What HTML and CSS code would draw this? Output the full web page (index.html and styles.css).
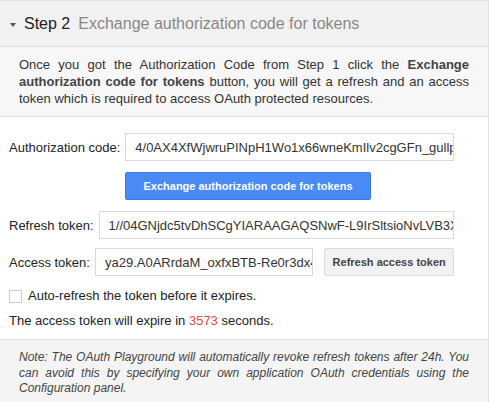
FILE: index.html
```html
<!DOCTYPE html>
<html>
<head>
<meta charset="utf-8">
<link rel="stylesheet" href="styles.css">
</head>
<body>
<div class="panel">
  <div class="step-header">
    <span class="caret"></span>
    <span class="step-num">Step 2</span>
    <span class="step-title">Exchange authorization code for tokens</span>
  </div>
  <div class="desc">
    Once you got the Authorization Code from Step 1 click the <b>Exchange authorization code for tokens</b> button, you will get a refresh and an access token which is required to access OAuth protected resources.
  </div>
  <div class="form">
    <div class="row row-auth">
      <label class="lbl">Authorization code:</label>
      <input class="field field-auth" type="text" value="4/0AX4XfWjwruPINpH1Wo1x66wneKmIlv2cgGFn_gullp7xRzVq">
    </div>
    <div class="btn-row">
      <button class="btn-primary">Exchange authorization code for tokens</button>
    </div>
    <div class="row row-refresh">
      <label class="lbl">Refresh token:</label>
      <input class="field field-refresh" type="text" value="1//04GNjdc5tvDhSCgYIARAAGAQSNwF-L9IrSltsioNvLVB3XqW">
    </div>
    <div class="row row-access">
      <label class="lbl">Access token:</label>
      <input class="field field-access" type="text" value="ya29.A0ARrdaM_oxfxBTB-Re0r3dx4kQ">
      <button class="btn-secondary">Refresh access token</button>
    </div>
    <div class="check-row">
      <span class="checkbox"></span>
      <span>Auto-refresh the token before it expires.</span>
    </div>
    <div class="expire">The access token will expire in <span class="secs">3573</span> seconds.</div>
  </div>
  <div class="note">
    Note: The OAuth Playground will automatically revoke refresh tokens after 24h. You can avoid this by specifying your own application OAuth credentials using the Configuration panel.
  </div>
</div>
</body>
</html>
```

FILE: styles.css
```css
html, body {
  margin: 0;
  padding: 0;
  background: #fff;
}
body {
  font-family: "Liberation Sans", Arial, sans-serif;
  color: #222;
}
.panel {
  width: 488px;
  border-right: 1px solid #e0e0e0;
  min-height: 402px;
  display: flex;
  flex-direction: column;
}
.step-header {
  box-sizing: border-box;
  height: 47px;
  border-top: 1px solid #e2e2e2;
  border-bottom: 1px solid #dcdcdc;
  background: #f1f1f1;
  display: flex;
  align-items: center;
  padding-left: 10px;
  padding-top: 1px;
  font-size: 16px;
}
.caret {
  width: 0;
  height: 0;
  border-left: 3.5px solid transparent;
  border-right: 3.5px solid transparent;
  border-top: 4px solid #555;
  margin-right: 8px;
  margin-top: 1px;
}
.step-num {
  color: #222;
  margin-right: 8px;
}
.step-title {
  color: #888;
}
.desc {
  background: #f7f7f7;
  border-bottom: 1px solid #e2e2e2;
  padding: 9px 19px 9px 19px;
  font-size: 13px;
  line-height: 17px;
  color: #333;
  text-align: justify;
}
.desc b {
  color: #444;
}
.form {
  padding: 16px 34px 0 9px;
  font-size: 13px;
  flex: 1;
}
.row {
  display: flex;
  align-items: center;
}
.lbl {
  color: #222;
  white-space: nowrap;
}
.field {
  height: 28px;
  box-sizing: border-box;
  border: 1px solid #d9d9d9;
  padding: 0 0 0 9px;
  font-family: "Liberation Sans", Arial, sans-serif;
  font-size: 13px;
  color: #333;
  background: #fff;
  outline: none;
}
.field-auth {
  margin-left: 5px;
  flex: 1;
  min-width: 0;
}
.field-refresh {
  margin-left: 5px;
  flex: 1;
  min-width: 0;
}
.field-access {
  margin-left: 5px;
  width: 219px;
}
.btn-row {
  margin: 11px 0 11px 116px;
}
.btn-primary {
  height: 28px;
  width: 246px;
  background: #4a8af4;
  border: 1px solid #3b7be8;
  border-radius: 2px;
  color: #fff;
  font-family: "Liberation Sans", Arial, sans-serif;
  font-weight: bold;
  font-size: 11px;
  padding: 0;
}
.row-access {
  margin-top: 9px;
}
.btn-secondary {
  margin-left: 11px;
  height: 28px;
  width: 130px;
  background: #f2f2f2;
  border: 1px solid #dcdcdc;
  border-radius: 2px;
  color: #444;
  font-family: "Liberation Sans", Arial, sans-serif;
  font-weight: bold;
  font-size: 11px;
  padding: 0;
}
.check-row {
  display: flex;
  align-items: center;
  margin-top: 12px;
  line-height: 16px;
  color: #222;
}
.checkbox {
  width: 11px;
  height: 11px;
  border: 1px solid #ccc;
  background: #fff;
  margin-right: 6px;
}
.expire {
  margin-top: 9px;
  line-height: 16px;
  color: #222;
}
.secs {
  color: #dd4b39;
}
.note {
  margin-top: 10px;
  background: #f4f4f4;
  border-top: 1px solid #e2e2e2;
  padding: 10px 19px 14px 19px;
  font-size: 12px;
  line-height: 15.5px;
  font-style: italic;
  color: #444;
  text-align: justify;
}
```
